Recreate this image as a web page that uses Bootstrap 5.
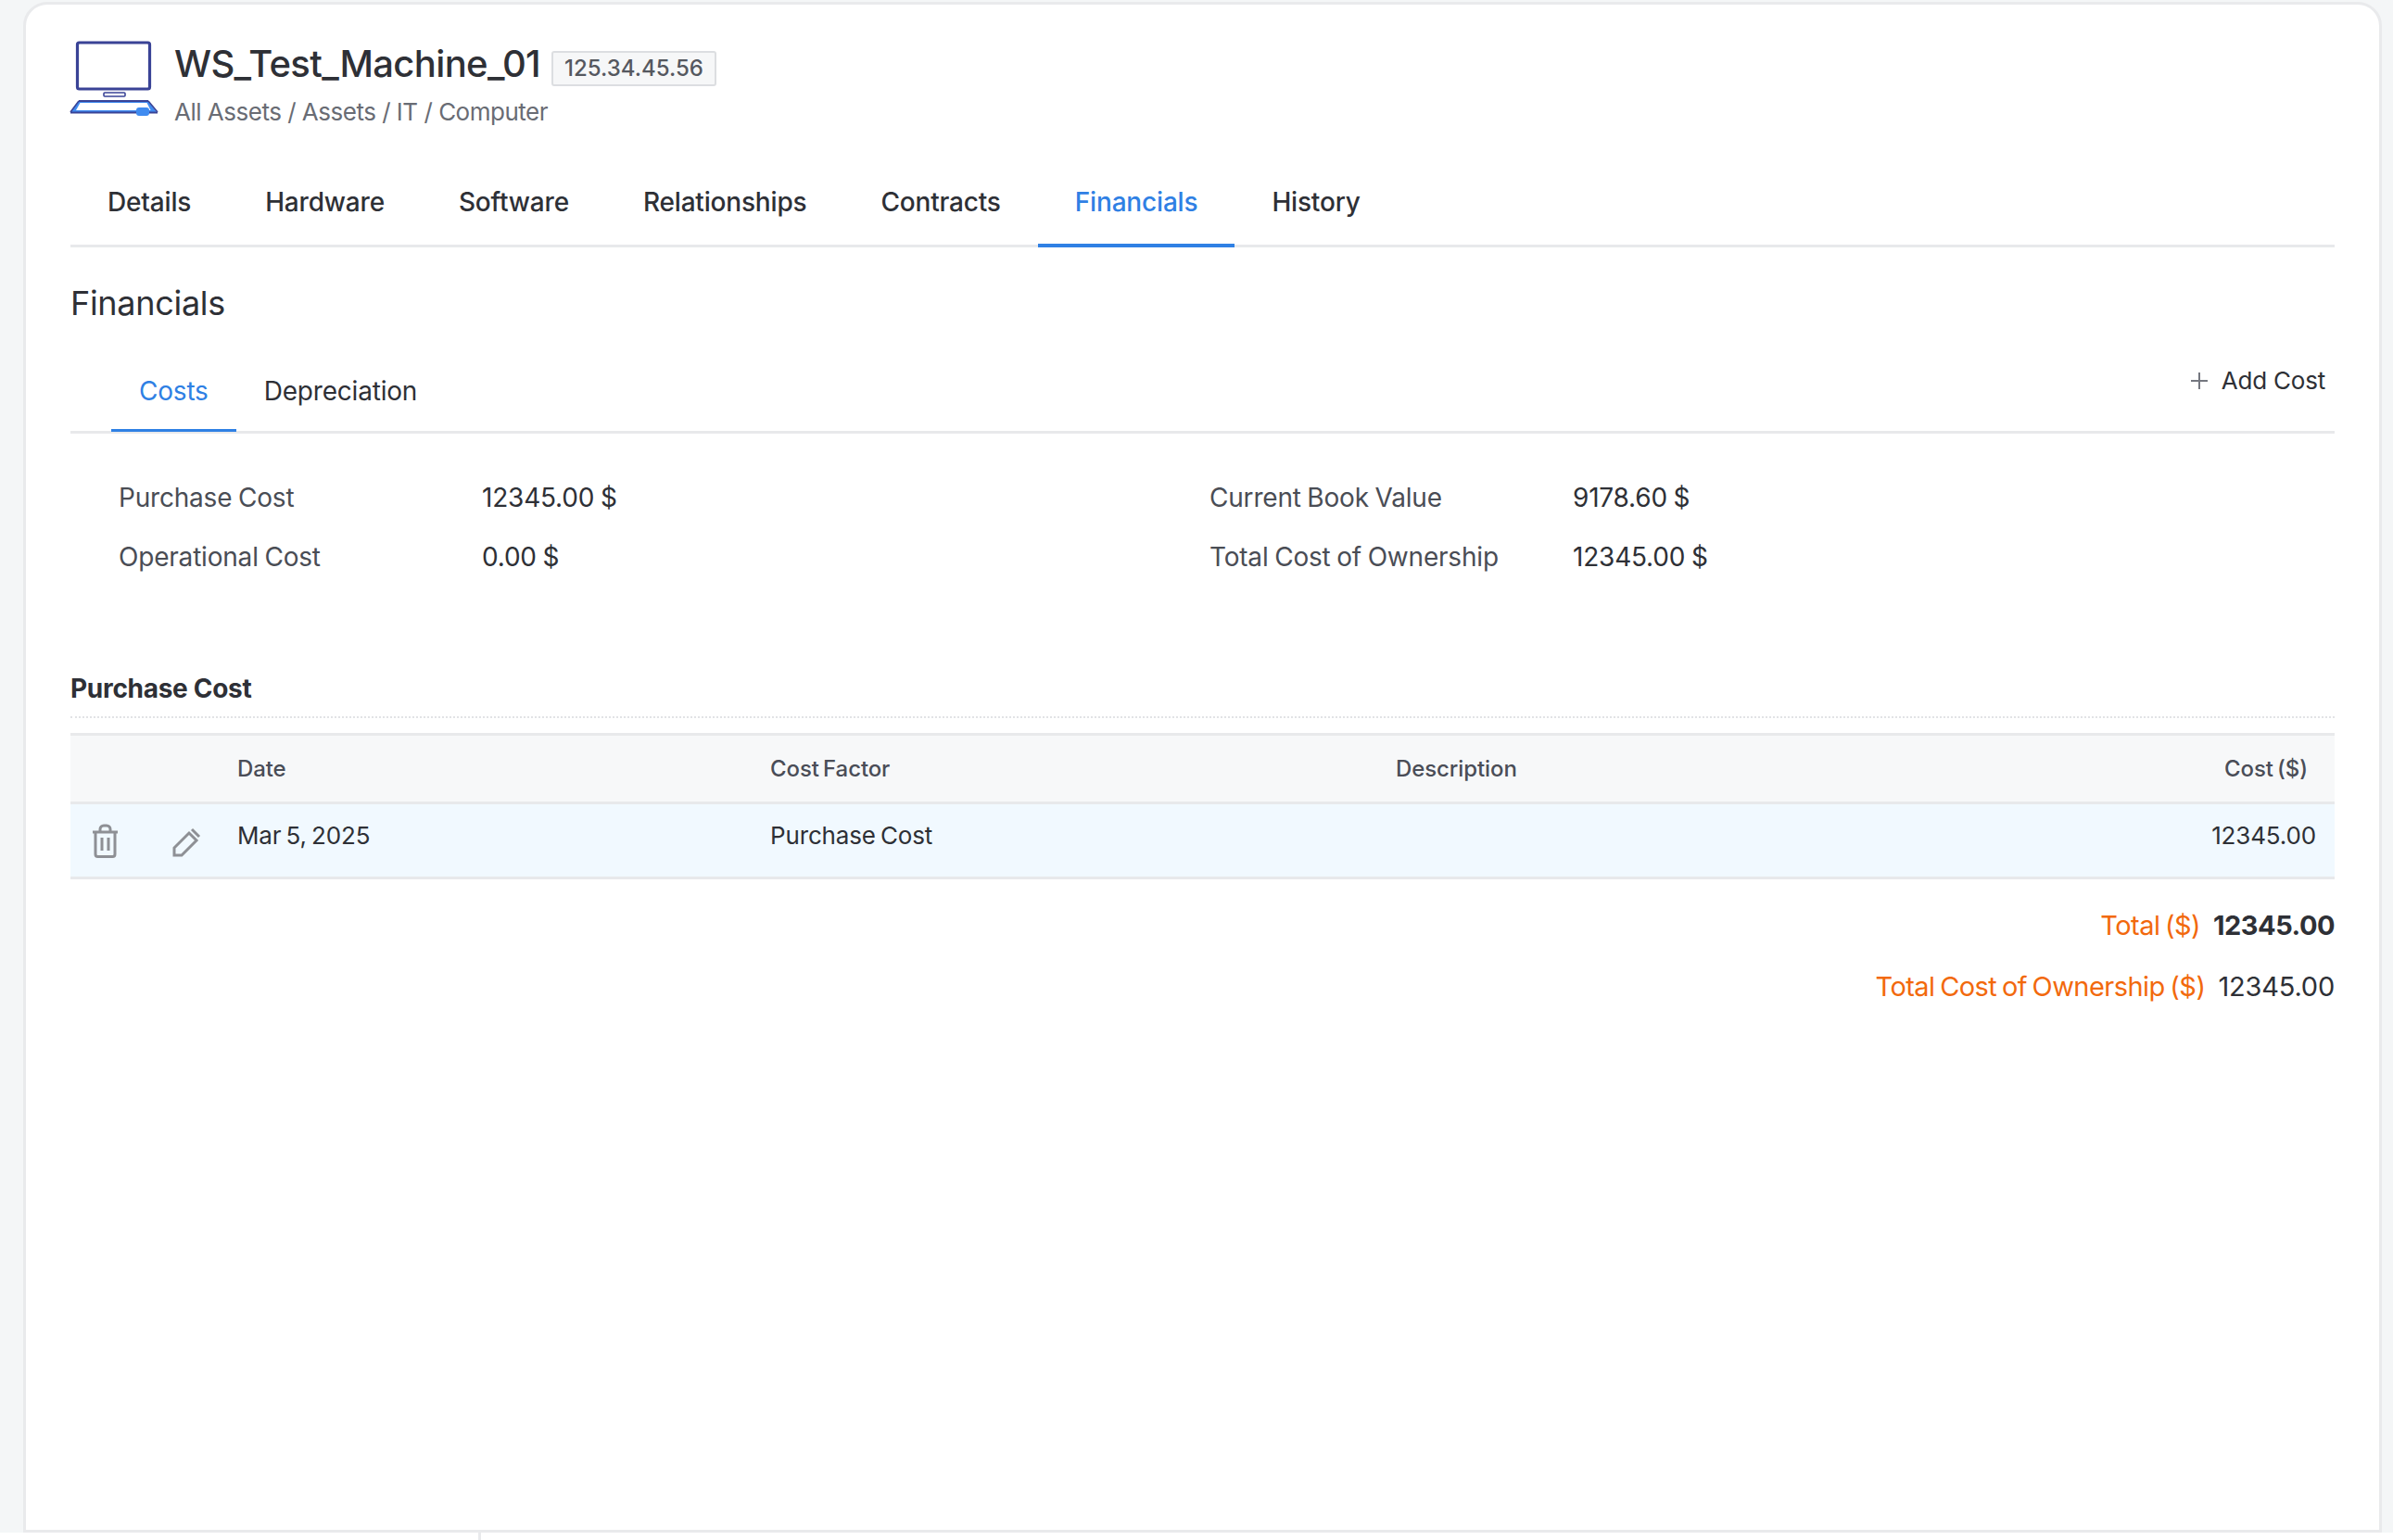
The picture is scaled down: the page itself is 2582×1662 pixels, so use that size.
<!DOCTYPE html>
<html lang="en">
<head>
<meta charset="UTF-8">
<meta name="viewport" content="width=device-width, initial-scale=1.0">
<title>WS_Test_Machine_01 - Financials</title>
<link href="https://cdn.jsdelivr.net/npm/bootstrap@5.3.3/dist/css/bootstrap.min.css" rel="stylesheet">
<style>
html, body { height: 100%; }
body { background: #fff; overflow: hidden; font-family: Inter, "Noto Sans", sans-serif; color: #2e3036; font-size: 27px; }
.app-shell { height: 1654px; background: #f4f6f7; padding: 2px 12px 0 25px; }
.asset-panel { height: 100%; background: #fff; border: 3px solid #e9eaec; border-radius: 26px 26px 0 0; padding: 0 48px; }
.asset-head { padding-top: 39px; height: 165px; }
.asset-icon { width: 100px; height: 82px; flex: none; margin-left: -1px; }
.asset-text { margin-left: 13px; }
.asset-title { font-size: 40px; line-height: 50px; font-weight: 500; margin: 0; letter-spacing: -.65px; }
.asset-ip { font-size: 24px; font-weight: 500; line-height: 34px; color: #55585f; background: #f6f7f8; border: 2px solid #dcdee1; border-radius: 3px; padding: 0 12px; margin-left: 12px; margin-top: 11px; }
.asset-path { font-size: 26px; line-height: 36px; color: #696c74; margin-top: 9px; letter-spacing: -.5px; }
.main-tabs { border-bottom: 3px solid #e8e9eb; height: 97px; }
.main-tabs .nav-link { font-size: 28px; font-weight: 500; color: #2e3036; padding: 27px 40px 0; height: 97px; border-bottom: 4px solid transparent; letter-spacing: -.18px; }
.main-tabs .nav-link.active { color: #2f80e4; border-bottom-color: #2f80e4; }
.section-title { font-size: 36px; font-weight: 400; line-height: 44px; margin: 38px 0 0; letter-spacing: -.3px; }
.sub-bar { border-bottom: 3px solid #e8e9eb; height: 94px; margin-top: 25px; padding-left: 44px; }
.sub-tabs .nav-link { font-size: 28px; color: #2e3036; padding: 27px 30px 0; height: 92px; border-bottom: 3px solid transparent; letter-spacing: -.2px; }
.sub-tabs .nav-link.active { color: #2f80e4; border-bottom-color: #2f80e4; }
.add-cost { font-size: 26px; color: #2e3036; text-decoration: none; margin-right: 10px; padding-top: 17px; letter-spacing: -.2px; }
.add-cost svg { width: 22px; height: 22px; margin-right: 13px; vertical-align: -2px; }
.cost-summary { padding: 48px 0 0 52px; height: 257px; }
.sum-block { width: 1177px; }
.sum-row { display: flex; height: 64px; font-size: 28px; letter-spacing: -.2px; word-spacing: -1px; }
.sum-label { width: 392px; color: #4a4d55; }
.price-title { font-size: 28px; font-weight: 700; line-height: 36px; margin: 0; padding-bottom: 12px; border-bottom: 2px dotted #e2e3e5; letter-spacing: -.3px; }
.cost-table { table-layout: fixed; margin: 16px 0 0; width: 100%; }
.cost-table th { background: #f7f8f9; color: #4a4d57; font-size: 24px; font-weight: 500; height: 74px; padding: 0; vertical-align: middle; border-top: 3px solid #e8e9eb; border-bottom: 3px solid #e8e9eb; word-spacing: -2px; letter-spacing: -.1px; }
.cost-table td { background: #f1f9ff; color: #2e3036; font-size: 26px; height: 81px; padding: 14px 0 0; vertical-align: top; border-bottom: 3px solid #e8e9eb; letter-spacing: -.15px; word-spacing: -2px; }
.col-ico { width: 86px; }
.col-edit { width: 94px; }
.col-date { width: 575px; }
.col-factor { width: 675px; }
.cost-table th.cost-num { padding-right: 29px; }
.cost-table td.cost-num { padding-right: 20px; }
.row-ico { width: 34px; height: 38px; display: block; margin: 7px 0 0 21px; }
.total-line { display: flex; justify-content: flex-end; gap: 14px; font-size: 29px; line-height: 40px; letter-spacing: -.2px; }
.total-line strong { letter-spacing: -.5px; }
.total-line .tot-label { color: #f2690d; letter-spacing: -.55px; word-spacing: -2px; }
.total-first { margin-top: 30px; }
.total-next { margin-top: 26px; }
.page-foot { height: 8px; }
.foot-split { margin-left: 516px; height: 8px; border-left: 3px solid #e9eaec; }
</style>
</head>
<body>
<div class="app-shell">
  <div class="asset-panel">
    <div class="asset-head d-flex">
      <svg class="asset-icon" viewBox="0 0 100 82" fill="none">
        <rect x="8.5" y="2" width="78" height="50" rx="2" stroke="#3a4396" stroke-width="3.200" fill="#fff"/>
        <rect x="37" y="56" width="23" height="4" rx="1" stroke="#3a4396" stroke-width="1.6"/>
        <path d="M10 65h75l9 12H1z" fill="#3f8bf0"/>
        <path d="M11.500 67h72l4 8H7z" fill="#fff"/>
        <path d="M1 77.500h94M10 65h75" stroke="#3a4396" stroke-width="2"/>
        <path d="M10 65 1 77M85 65l10 12" stroke="#3a4396" stroke-width="1.600"/>
        <rect x="72" y="72" width="14" height="9" rx="3" fill="#3f8bf0"/>
      </svg>
      <div class="asset-text">
        <div class="d-flex align-items-start">
          <h1 class="asset-title">WS_Test_Machine_01</h1>
          <span class="asset-ip">125.34.45.56</span>
        </div>
        <div class="asset-path">All Assets / Assets / IT / Computer</div>
      </div>
    </div>

    <ul class="nav main-tabs">
      <li class="nav-item"><a class="nav-link" href="#">Details</a></li>
      <li class="nav-item"><a class="nav-link" href="#">Hardware</a></li>
      <li class="nav-item"><a class="nav-link" href="#">Software</a></li>
      <li class="nav-item"><a class="nav-link" href="#">Relationships</a></li>
      <li class="nav-item"><a class="nav-link" href="#">Contracts</a></li>
      <li class="nav-item"><a class="nav-link active" href="#">Financials</a></li>
      <li class="nav-item"><a class="nav-link" href="#">History</a></li>
    </ul>

    <h2 class="section-title">Financials</h2>

    <div class="sub-bar d-flex justify-content-between">
      <ul class="nav sub-tabs">
        <li class="nav-item"><a class="nav-link active" href="#">Costs</a></li>
        <li class="nav-item"><a class="nav-link" href="#">Depreciation</a></li>
      </ul>
      <a class="add-cost" href="#"><svg viewBox="0 0 22 22"><path d="M11 2v18M2 11h18" stroke="#74777f" stroke-width="2"/></svg>Add Cost</a>
    </div>

    <div class="cost-summary d-flex gap-0">
      <div class="sum-block">
        <div class="sum-row"><span class="sum-label">Purchase Cost</span><span>12345.00 $</span></div>
        <div class="sum-row"><span class="sum-label">Operational Cost</span><span>0.00 $</span></div>
      </div>
      <div class="sum-block">
        <div class="sum-row"><span class="sum-label">Current Book Value</span><span>9178.60 $</span></div>
        <div class="sum-row"><span class="sum-label">Total Cost of Ownership</span><span>12345.00 $</span></div>
      </div>
    </div>

    <h3 class="price-title">Purchase Cost</h3>

    <table class="cost-table">
      <thead>
        <tr>
          <th class="col-ico"></th>
          <th class="col-edit"></th>
          <th class="col-date">Date</th>
          <th class="col-factor">Cost Factor</th>
          <th>Description</th>
          <th class="cost-num text-end">Cost ($)</th>
        </tr>
      </thead>
      <tbody>
        <tr>
          <td>
            <svg class="row-ico" viewBox="0 0 34 38" fill="none" stroke="#8e9095" stroke-width="3">
              <path d="M3 9h27M11 9V6a4 4 0 0 1 4-4h3a4 4 0 0 1 4 4v3"/>
              <path d="M6 9v24a2.500 2.500 0 0 0 2.500 2.500h16A2.500 2.500 0 0 0 27 33V9"/>
              <path d="M13 15v14M20 15v14"/>
            </svg>
          </td>
          <td>
            <svg class="row-ico" viewBox="0 0 34 38" fill="none" stroke="#8e9095" stroke-width="3">
              <path d="M5 26 21 10l8 8-16 16H5z"/>
              <path d="M24 6l8 8"/>
            </svg>
          </td>
          <td>Mar 5, 2025</td>
          <td>Purchase Cost</td>
          <td></td>
          <td class="cost-num text-end">12345.00</td>
        </tr>
      </tbody>
    </table>

    <div class="total-line total-first"><span class="tot-label">Total ($)</span><strong>12345.00</strong></div>
    <div class="total-line total-next"><span class="tot-label">Total Cost of Ownership ($)</span><span>12345.00</span></div>
  </div>
</div>
<div class="page-foot"><div class="foot-split"></div></div>
<script src="https://cdn.jsdelivr.net/npm/bootstrap@5.3.3/dist/js/bootstrap.bundle.min.js"></script>
</body>
</html>
